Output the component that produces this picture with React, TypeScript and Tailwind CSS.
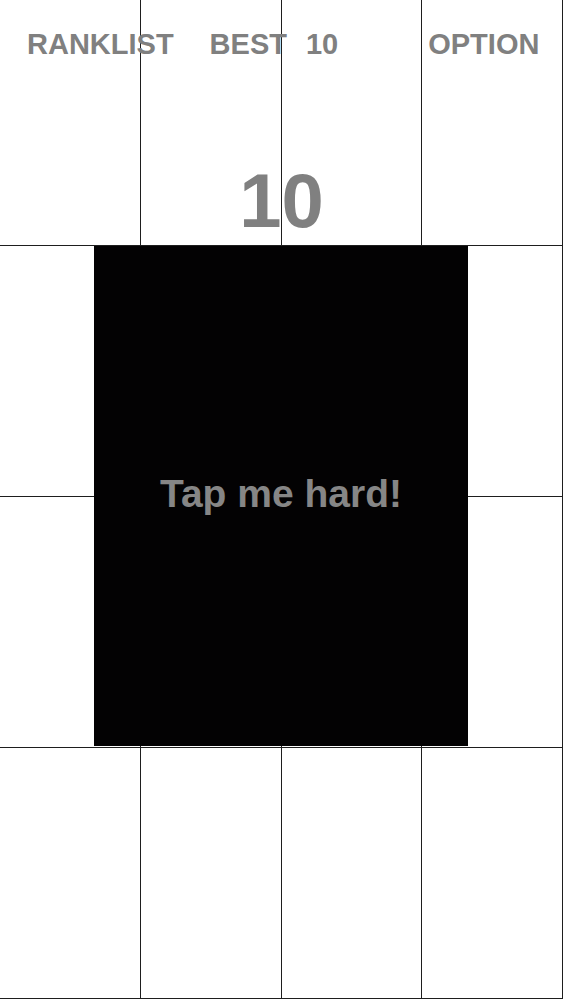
import React from "react";

function Row({ h, children }: { h: string; children?: React.ReactNode }) {
  return (
    <div className={`relative grid grid-cols-4 border-b border-[#1e1e1e] ${h}`}>
      <div className="border-r border-[#1e1e1e]" />
      <div className="border-r border-[#1e1e1e]" />
      <div className="border-r border-[#1e1e1e]" />
      <div className="border-r border-[#1e1e1e]" />
      {children}
    </div>
  );
}

export default function App() {
  return (
    <div
      className="relative w-[563px] h-[1000px] bg-white overflow-hidden font-bold text-[#808080]"
      style={{ fontFamily: '"Liberation Sans", Arial, sans-serif' }}
    >
      <Row h="h-[246px]">
        <div className="absolute inset-0 flex flex-col">
          <div className="flex pt-[30px] text-[29px] leading-[29px]">
            <span className="ml-[27px]">RANKLIST</span>
            <span className="ml-[36px]">BEST</span>
            <span className="ml-[19px]">10</span>
            <span className="ml-[90px]">OPTION</span>
          </div>
          <div className="mt-[104px] text-center text-[76px] leading-[76px]">10</div>
        </div>
      </Row>
      <Row h="h-[251px]" />
      <Row h="h-[251px]" />
      <Row h="h-[251px]" />
      <div className="absolute left-[94px] top-[246px] w-[374px] h-[500px] bg-[#030203] flex items-center justify-center pb-[5px]">
        <span className="text-[39px] leading-[39px] text-[#868686]">Tap me hard!</span>
      </div>
    </div>
  );
}
